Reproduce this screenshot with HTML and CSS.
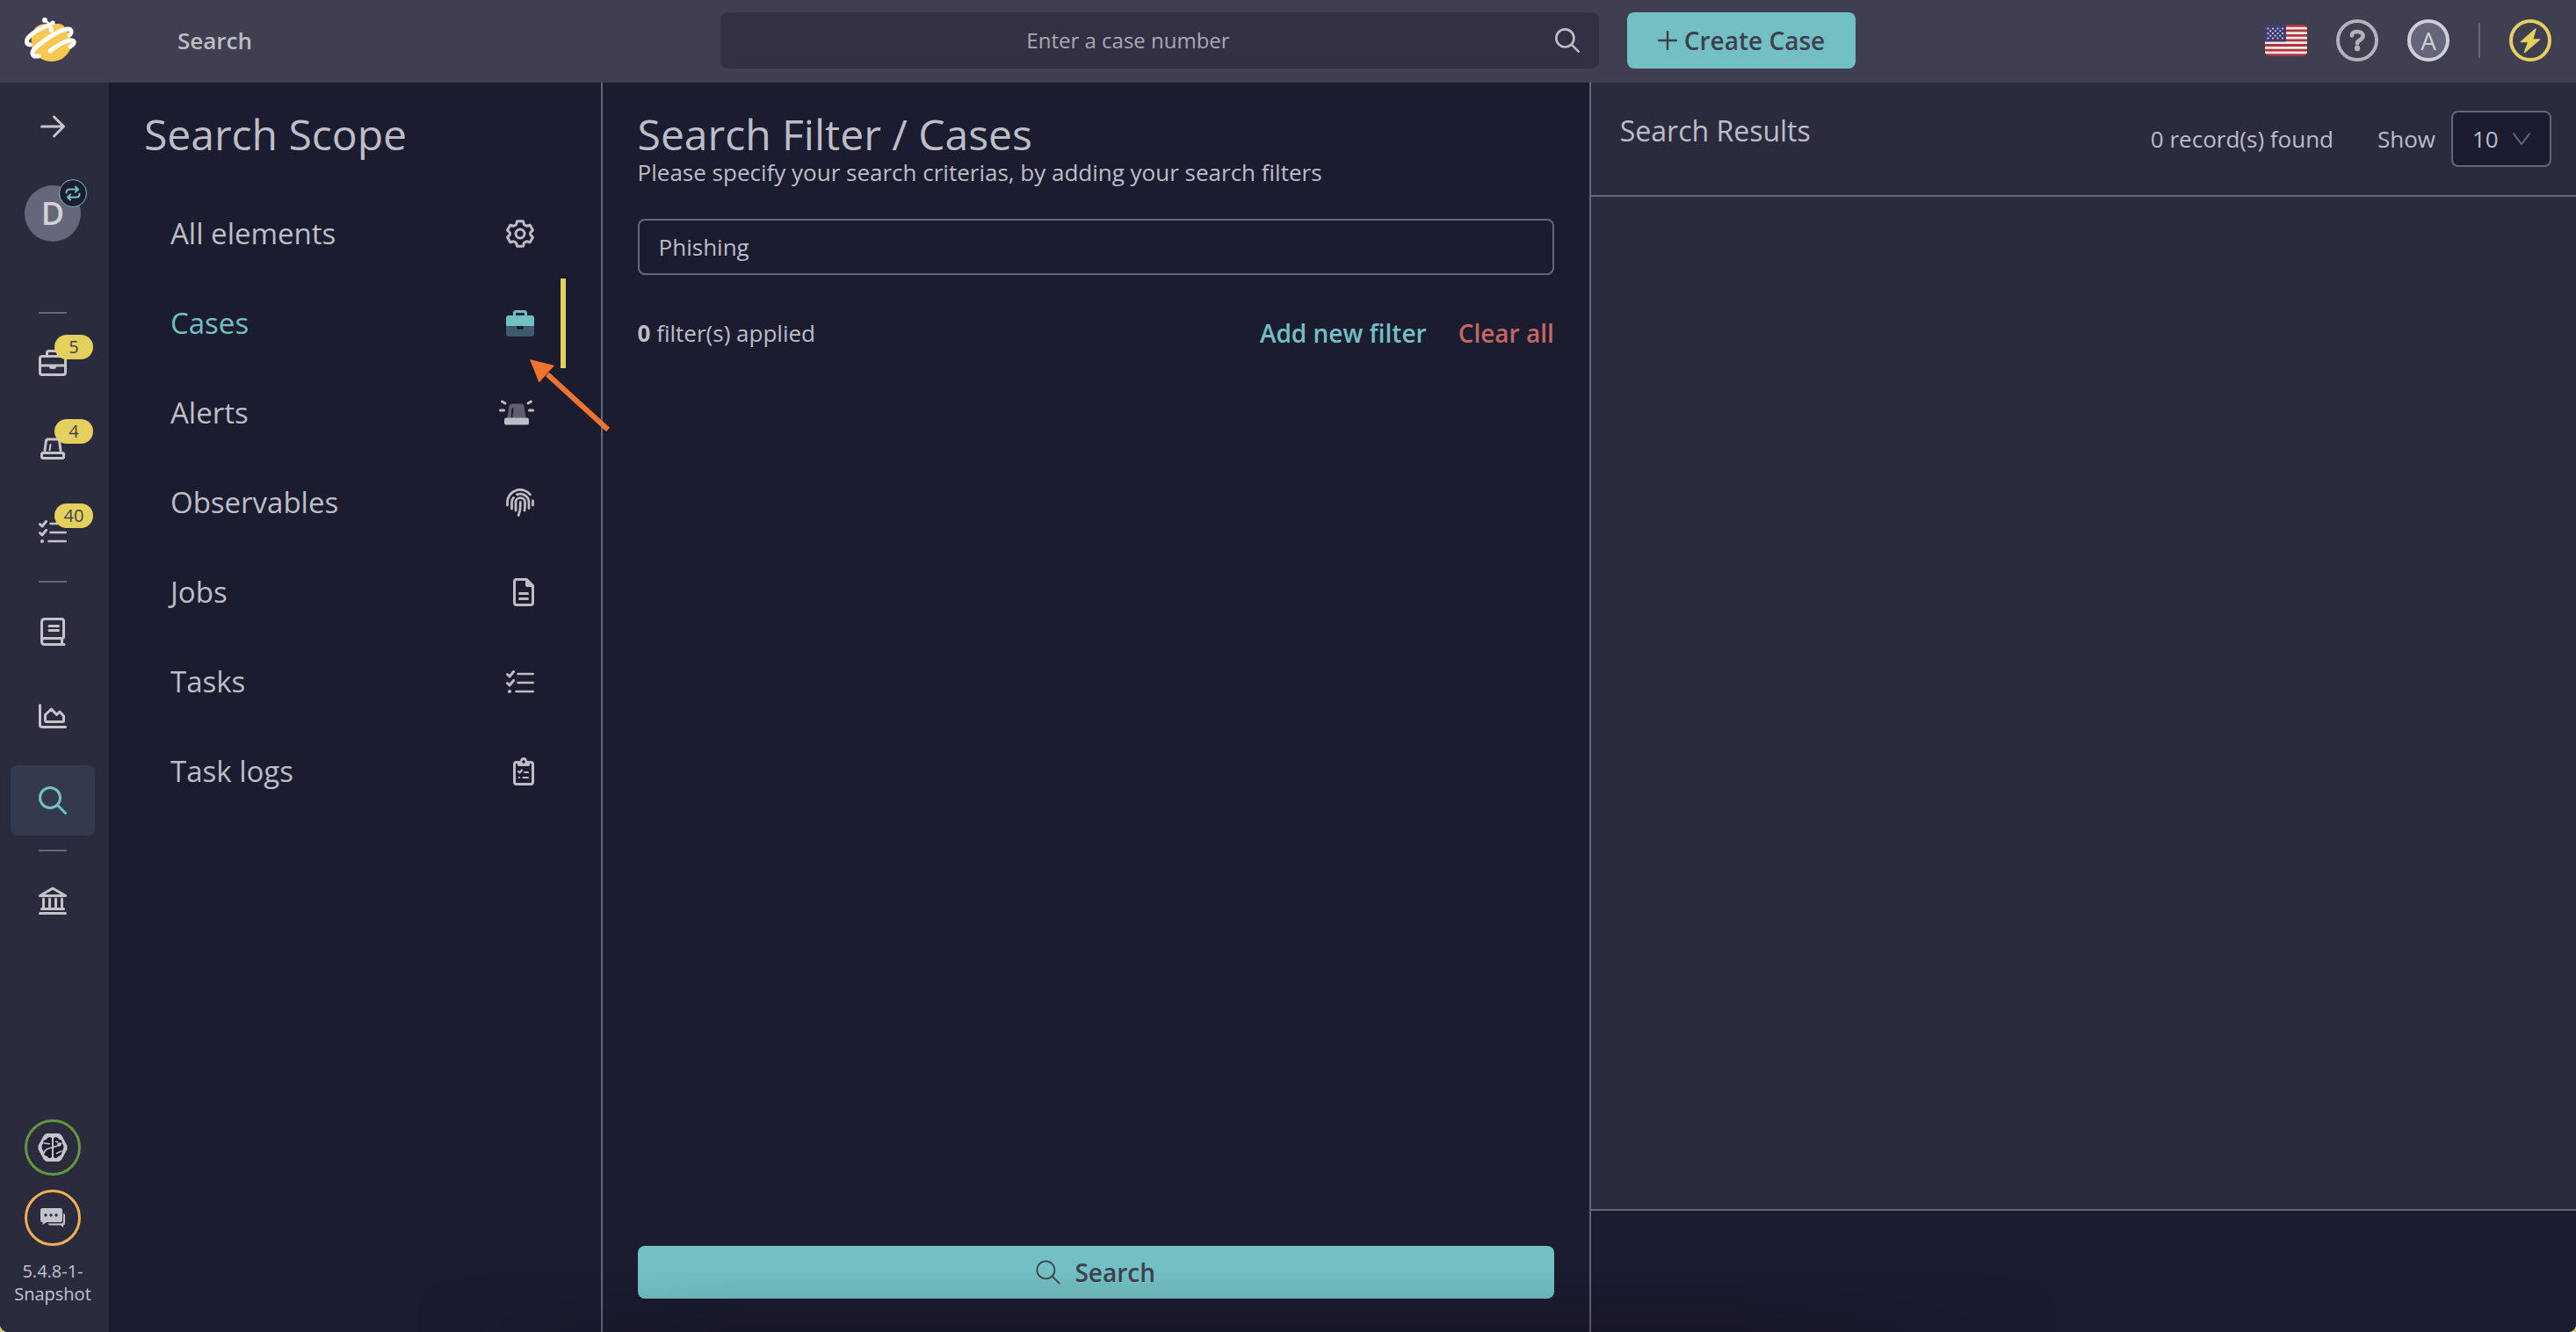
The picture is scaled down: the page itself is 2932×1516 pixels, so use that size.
FILE: index.html
```html
<!DOCTYPE html>
<html lang="en">
<head>
<meta charset="utf-8">
<meta name="viewport" content="width=device-width, initial-scale=1">
<title>Search</title>
<link rel="stylesheet" href="styles.css">
</head>
<body>
<svg class="sprite" aria-hidden="true">
  <symbol id="i-search" viewBox="0 0 32 32"><circle cx="13" cy="13" r="11.5"/><path d="M21.3 21.3 30.5 30.5"/></symbol>
  <symbol id="i-tasks" viewBox="0 0 32 32"><path d="M1.5 7.5 4 10l4.5-5.5M1.5 17.5 4 20l4.5-5.5"/><path d="M13.5 7H30.7M13.5 17H30.7M11.5 27H30.7" stroke-width="2.6"/><circle cx="4" cy="27" r="2" fill="currentColor" stroke="none"/></symbol>
</svg>
<div class="app">
  <header class="topbar">
    <div class="topbar-left">
      <a class="logo" href="#" aria-label="Home">
        <svg width="62" height="54" viewBox="0 0 62 54" fill="none" stroke-linecap="round" stroke-linejoin="round">
          <path d="M16 10c4-2 8-2 14-2 7 0 12-1 15 3 2 3 4 6 6 10 3 6 3 12 0 18-4 7-11 12-20 12-7 0-14-3-20-9-3-4-4-11-3-18 1-6 3-12 8-14Z" fill="#f6c851"/>
          <path d="M6 32C1 31 1 26 7 21C13 16 21 12 27 10" stroke="#fff" stroke-width="5"/>
          <path d="M16 45H11C7 42 9 38 15 33C25 25 40 15 49 14C54 14 54 18 51 21" stroke="#fff" stroke-width="5"/>
          <path d="M29 39C35 34 46 27 53 27C58 27 57 31 52 34" stroke="#fff" stroke-width="5"/>
          <circle cx="23" cy="4" r="3" fill="#fff"/><circle cx="32" cy="7" r="2.6" fill="#fff"/>
          <path d="M23 4 28 8 32 7" stroke="#fff" stroke-width="2.4"/>
          <path d="M29 8C27 13 27 18 31 18C35 17 33 12 29 8Z" fill="#fff"/>
        </svg>
      </a>
      <span class="page-title">Search</span>
    </div>
    <div class="topbar-center">
      <form class="case-search">
        <input type="text" placeholder="Enter a case number" aria-label="Enter a case number">
        <button type="button" aria-label="Search case"><svg class="icon" width="28" height="28"><use href="#i-search"/></svg></button>
      </form>
      <button class="btn create" type="button"><svg width="22" height="22" viewBox="0 0 22 22" stroke="currentColor" stroke-width="2.4" stroke-linecap="round"><path d="M11 1V21M1 11H21"/></svg>Create Case</button>
    </div>
    <div class="topbar-right">
      <button class="round-btn" type="button" aria-label="Language">
        <svg width="48" height="36" viewBox="0 0 48 36">
          <clipPath id="flag-clip"><rect width="48" height="36" rx="5"/></clipPath>
          <g clip-path="url(#flag-clip)">
            <rect width="48" height="36" fill="#b0343c"/>
            <path d="M0 4.1H48M0 9.7H48M0 15.2H48M0 20.7H48M0 26.3H48M0 31.8H48" stroke="#eeeaec" stroke-width="2.8"/>
            <rect width="24" height="19.4" fill="#3f3d73"/>
            <path d="M3.5 4.5H22M3.5 10H22M3.5 15.500H22" stroke="#dcdce8" stroke-width="2" stroke-linecap="round" stroke-dasharray="0 5.5"/>
            <path d="M6.200 7.200H20M6.200 12.700H20" stroke="#dcdce8" stroke-width="2" stroke-linecap="round" stroke-dasharray="0 5.5"/>
          </g>
        </svg>
      </button>
      <button class="round-btn help" type="button" aria-label="Help">
        <svg width="48" height="48" viewBox="0 0 48 48" fill="none" stroke="currentColor" stroke-width="4"><circle cx="24" cy="24" r="22"/><path d="M18 18.500C18 14.500 20.500 14 24 14C28 14 30.500 16 30.500 19C30.500 23.500 24 23.500 24 27.500" stroke-width="4.6" stroke-linecap="round"/><circle cx="24" cy="33" r="3.2" fill="currentColor" stroke="none"/></svg>
      </button>
      <button class="round-btn user" type="button">A</button>
      <span class="v-rule"></span>
      <button class="round-btn bolt" type="button" aria-label="Status">
        <svg width="48" height="48" viewBox="0 0 48 48"><circle cx="24" cy="24" r="22" fill="none" stroke="currentColor" stroke-width="4"/><path d="M30 11 13.500 25.500H22L17.500 37.500 34.500 23H26.500Z" fill="currentColor" stroke="currentColor" stroke-width="1.500" stroke-linejoin="round"/></svg>
      </button>
    </div>
  </header>

  <div class="workspace">
    <nav class="sidebar" aria-label="Main">
      <button class="side-item expand" type="button" aria-label="Expand menu"><svg class="icon" width="32" height="32" viewBox="0 0 32 32"><path d="M3.500 16H28.500M17.500 5 28.500 16 17.500 27"/></svg></button>
      <button class="org" type="button"><span>D</span>
        <span class="org-switch"><svg width="18" height="18" viewBox="0 0 18 18" fill="none" stroke="currentColor" stroke-width="2" stroke-linecap="round"><path d="M1.500 8.500C1.500 5.500 3 4.500 5 4.500H14M12 1.500 15 4.500 12 7.500M16.500 9.500C16.500 12.500 15 13.500 13 13.500H4M6 10.500 3 13.500 6 16.500"/></svg></span>
      </button>
      <hr>
      <a class="side-item" href="#" aria-label="Cases"><svg class="icon" width="32" height="32" viewBox="0 0 32 32"><rect x="1.500" y="8.500" width="29" height="21" rx="2.500"/><path d="M9.500 8V4.500Q9.500 2.500 11.500 2.500H20.500Q22.500 2.500 22.500 4.500V8M1.500 19H30.500"/><path d="M12 19H20V20Q20 23 17.500 23H14.500Q12 23 12 20Z" fill="currentColor" stroke="none"/></svg><span class="badge">5</span></a>
      <a class="side-item" href="#" aria-label="Alerts"><svg class="icon" width="32" height="32" viewBox="0 0 32 32"><rect x="3.500" y="22.500" width="25" height="6" rx="1.500"/><path d="M7 19.500 8.500 8.500Q8.800 7 10.500 7H21.500Q23.200 7 23.500 8.500L25 19.500"/><path d="M12.500 19.500 13.500 13" stroke-width="2"/></svg><span class="badge">4</span></a>
      <a class="side-item" href="#" aria-label="Tasks"><svg class="icon" width="32" height="32"><use href="#i-tasks"/></svg><span class="badge">40</span></a>
      <hr>
      <a class="side-item" href="#" aria-label="Knowledge base"><svg class="icon" width="32" height="32" viewBox="0 0 32 32"><path d="M29 30.500H6.500Q3.500 30.500 3.500 27V5Q3.500 1.500 7 1.500H26Q28.500 1.500 28.500 4V21.500Q28.500 23.500 26.500 23.500H6.500Q3.500 23.500 3.500 27M26.500 24V30M12 9.500H22.500M12 14.500H22.500"/></svg></a>
      <a class="side-item" href="#" aria-label="Dashboards"><svg class="icon" width="32" height="32" viewBox="0 0 32 32"><path d="M1.500 3.500V26Q1.500 28.500 4 28.500H30.500"/><path d="M7.500 21V14.500L14.500 8 20.500 14.500 24 11 28.500 16V21Q28.500 22.500 27 22.500H9Q7.500 22.500 7.500 21Z"/></svg></a>
      <a class="side-item active" href="#" aria-label="Search"><svg class="icon" width="32" height="32"><use href="#i-search"/></svg></a>
      <hr>
      <a class="side-item" href="#" aria-label="Organisation"><svg class="icon" width="32" height="32" viewBox="0 0 32 32"><path d="M1.500 10.500 16 2 30.500 10.500V10.500H1.500ZM1.500 30.500H30.500M3.500 25.500H28.500M5.500 14V25M12.500 14V25M19.500 14V25M26.500 14V25"/></svg></a>
      <div class="side-bottom">
        <button class="ring green" type="button" aria-label="Cortex"><svg width="36" height="36" viewBox="0 0 36 36"><path d="M11 2H25L28 4 34.500 16V20L28 32 25 34H11L8 32 1.500 20V16L8 4Z" fill="currentColor"/><path d="M17 7C14 5 11 7 11 9C8 9 7 11 7.500 13C5 15 5 20 7.500 22C7 26 10 28 12 28C13 31 16 30 17 29ZM19 7C22 5 25 7 25 9C28 9 29 11 28.500 13C31 15 31 20 28.500 22C29 26 26 28 24 28C23 31 20 30 19 29Z" fill="#1b1c30"/><path d="M8 25C9 16 22 20 28 13M8 13 15 14M21 11 24 12M22 25 28 22" fill="none" stroke="currentColor" stroke-width="1.600"/><circle cx="25.500" cy="14.500" r="2.200" fill="currentColor"/></svg></button>
        <button class="ring orange" type="button" aria-label="Chat"><svg width="32" height="32" viewBox="0 0 32 32"><path d="M4.500 5H24.500Q27 5 27 7.500V18.500Q27 21 24.500 21H9L4.500 24V21Q2 21 2 18.500V7.500Q2 5 4.500 5Z" fill="currentColor"/><path d="M28 11Q30 11 30 13V22Q30 24.500 28 24.500V27L25 24.500H13Q11 24.500 10.500 22.500H26Q28 22.500 28 20Z" fill="currentColor"/><g fill="#2b2b3e"><circle cx="8" cy="13" r="1.700"/><circle cx="14" cy="13" r="1.700"/><circle cx="20" cy="13" r="1.700"/></g></svg></button>
        <p class="version">5.4.8-1-Snapshot</p>
      </div>
    </nav>

    <main class="panels">
      <section class="scope">
        <h1>Search Scope</h1>
        <ul class="scope-list">
          <li><a href="#">All elements<svg class="icon" width="32" height="32" viewBox="0 0 32 32"><circle cx="16" cy="16" r="5"/><path d="M12.500 1.800H19.500L20.500 5.700 23.300 7.300 27.200 6.200 30.500 12 27.700 14.800V17.200L30.500 20 27.200 25.800 23.300 24.700 20.500 26.300 19.500 30.200H12.500L11.500 26.300 8.700 24.700 4.800 25.800 1.500 20 4.300 17.200V14.800L1.500 12 4.800 6.200 8.700 7.300 11.500 5.700Z"/></svg></a></li>
          <li><a class="active" href="#" aria-current="true">Cases<svg width="32" height="32" viewBox="0 0 32 32"><path d="M9.500 8V4.500Q9.500 2.500 11.500 2.500H20.500Q22.500 2.500 22.500 4.500V8" fill="none" stroke="currentColor" stroke-width="3"/><path d="M3 7H29Q32 7 32 10V19H0V10Q0 7 3 7Z" fill="currentColor"/><path d="M0 19H12V20.500Q12 23 14.500 23H17.500Q20 23 20 20.500V19H32V28Q32 31 29 31H3Q0 31 0 28Z" fill="#3f5b6b"/></svg></a></li>
          <li><a href="#">Alerts<svg width="40" height="32" viewBox="0 0 40 32"><path d="M9 24 11.500 8.500Q12 5.500 15 5.500H25Q28 5.500 28.500 8.500L31 24Z" fill="#5f5e70"/><path d="M14.500 21 15.500 11" stroke="#1b1c30" stroke-width="1.800" stroke-linecap="round"/><rect x="6" y="21.500" width="28" height="8" rx="2" fill="currentColor"/><path d="M1.500 13H5.500M34.500 13H38.500M3.500 3 7 5M36.500 3 33 5" stroke="currentColor" stroke-width="3" stroke-linecap="round"/></svg></a></li>
          <li><a href="#">Observables<svg class="icon" width="32" height="32" viewBox="0 0 32 32"><g stroke-width="2.800"><path d="M1.500 19V15.500A14.500 14.500 0 0 1 27.500 7M30.500 14V19M6.500 23V15.500Q6.500 12.500 8.500 10.500M12.500 6.800C20 4.500 26 9.500 26 15.500V22.500M11 25V15.500C11 9 21.500 9 21.500 15.500V19Q21.500 22 21 25M16.300 15.500V20Q16.300 25 14.200 30.500"/></g></svg></a></li>
          <li><a href="#">Jobs<svg class="icon" width="24" height="32" viewBox="0 0 24 32"><path d="M4 1.500H15.500L22.500 8.500V28Q22.500 30.500 20 30.500H4Q1.500 30.500 1.500 28V4Q1.500 1.500 4 1.500ZM7.500 17.500H16.500M7.500 23.500H16.500"/><path d="M14 1.500 23 10H16Q14 10 14 8Z" fill="currentColor" stroke="none"/></svg></a></li>
          <li><a href="#">Tasks<svg class="icon" width="32" height="32"><use href="#i-tasks"/></svg></a></li>
          <li><a href="#">Task logs<svg class="icon" width="24" height="32" viewBox="0 0 24 32"><rect x="1.500" y="5.500" width="21" height="25" rx="2.500"/><path d="M5 5H8Q8 0 12 0Q16 0 16 5H19V8.500Q19 10 17.500 10H6.500Q5 10 5 8.500Z" fill="currentColor" stroke="none"/><circle cx="12" cy="5" r="1.800" fill="#1b1c30" stroke="none"/><path d="M6 16 7.500 17.500 10 14.500M13 17H17M11.500 23H17M7 23H7.200" stroke-width="2.200"/></svg></a></li>
        </ul>
        <svg class="pointer" width="94" height="86" viewBox="0 0 94 86" aria-hidden="true"><path d="M21 18 90 81" stroke="#f0742e" stroke-width="6"/><path d="M1 1 29 8 11.500 27.500Z" fill="#f0742e"/></svg>
      </section>

      <section class="filter">
        <h1>Search Filter / Cases</h1>
        <p class="hint">Please specify your search criterias, by adding your search filters</p>
        <input class="query" type="text" value="Phishing" aria-label="Search text">
        <div class="filter-row">
          <span><b>0</b> filter(s) applied</span>
          <span class="filter-actions"><a class="add" href="#">Add new filter</a><a class="clear" href="#">Clear all</a></span>
        </div>
        <button class="btn submit" type="button"><svg class="icon thin" width="28" height="28"><use href="#i-search"/></svg>Search</button>
      </section>

      <section class="results">
        <div class="results-head">
          <h2>Search Results</h2>
          <span class="count">0 record(s) found</span>
          <label for="page-size">Show</label>
          <span class="select-wrap">
            <select id="page-size"><option>10</option><option>20</option><option>50</option></select>
            <svg width="22" height="16" viewBox="0 0 22 16" fill="none" stroke="currentColor" stroke-width="2"><path d="M1.500 1.500 11 14 20.500 1.500"/></svg>
          </span>
        </div>
        <div class="results-body"></div>
        <div class="results-foot"></div>
      </section>
    </main>
  </div>
</div>
</body>
</html>
```
FILE: styles.css
```css
:root {
  --bg: #1b1c30;
  --surface: #2b2b3e;
  --header: #3f3f51;
  --line: #66667b;
  --text: #bdbdc5;
  --teal: #72c0c3;
  --yellow: #e4d05d;
}

* { box-sizing: border-box; }

html { background: #d6cc86; }

body {
  margin: 0;
  font: 26px/36px "Open Sans", "Noto Sans", sans-serif;
  color: var(--text);
}

button, input, select { font: inherit; color: inherit; margin: 0; }
button { padding: 0; border: 0; background: none; cursor: pointer; }
a { color: inherit; text-decoration: none; }
h1, h2, p, ul { margin: 0; padding: 0; font-weight: 400; }
svg { display: block; flex: none; }

.sprite { position: absolute; width: 0; height: 0; }

.icon {
  fill: none;
  stroke: currentColor;
  stroke-width: 3px;
  stroke-linecap: round;
  stroke-linejoin: round;
}
.icon.thin { stroke-width: 2px; }

.app {
  position: relative;
  display: flex;
  flex-direction: column;
  min-height: 100vh;
  overflow: hidden;
  border-radius: 0 0 9px 9px;
  background: var(--bg);
}

/* Soft shade along the lower edge of the window */
.app::after {
  content: "";
  position: absolute;
  right: 20%;
  bottom: 0;
  left: 16%;
  height: 70px;
  background: linear-gradient(transparent, rgba(0, 0, 0, 0.16));
  mask-image: linear-gradient(90deg, transparent, #000 20%, #000 80%, transparent);
  pointer-events: none;
}

/* Top bar */
.topbar {
  display: grid;
  grid-template-columns: 1fr auto 1fr;
  height: 94px;
  padding: 0 28px 2px 0;
  background: var(--header);
}
.topbar-left { display: flex; align-items: center; gap: 78px; }
.logo { width: 124px; padding-left: 28px; }
.page-title { font-weight: 600; }
.topbar-center {
  display: flex;
  align-items: center;
  gap: 32px;
  margin-left: 28px;
}
.case-search {
  display: flex;
  width: 1000px;
  height: 64px;
  border-radius: 8px;
  background: #323042;
}
.case-search input {
  flex: 1;
  min-width: 0;
  border: 0;
  background: none;
  outline: none;
  font-size: 24px;
  text-align: center;
}
.case-search input::placeholder { color: #a9a9b2; opacity: 1; }
.case-search button { display: grid; place-items: center; width: 72px; }
.btn {
  display: flex;
  align-items: center;
  justify-content: center;
  border-radius: 8px;
  background: var(--teal);
  color: #403f50;
  font-size: 28px;
  font-weight: 600;
}
.create { gap: 8px; width: 260px; height: 64px; }
.topbar-right {
  display: flex;
  align-items: center;
  justify-content: flex-end;
  gap: 33px;
}
.round-btn { width: 48px; }
.help { color: #b2b2bb; }
.bolt { color: var(--yellow); }
.user {
  height: 48px;
  border: 4px solid #cfcfd7;
  border-radius: 50%;
  background: #66667b;
  color: #cfcfd7;
  font-size: 28px;
  line-height: 40px;
}
.v-rule { width: 2px; height: 40px; background: var(--line); }

/* Side bar */
.workspace { display: flex; flex: 1; }
.sidebar {
  display: flex;
  flex-direction: column;
  align-items: center;
  gap: 16px;
  width: 124px;
  padding: 10px 4px 30px 0;
  background: var(--surface);
  color: #c3c3cb;
}
.sidebar hr { width: 32px; height: 2px; margin: 0; border: 0; background: var(--line); }
.side-item {
  position: relative;
  display: grid;
  place-items: center;
  width: 96px;
  height: 80px;
  border-radius: 8px;
}
.side-item.active { background: #34394d; color: var(--teal); }
.badge {
  position: absolute;
  top: 8px;
  right: 2px;
  width: 44px;
  border-radius: 14px;
  background: var(--yellow);
  color: #403f50;
  font-size: 20px;
  line-height: 28px;
  text-align: center;
}
.org {
  position: relative;
  width: 64px;
  height: 64px;
  margin: 11px 0 64px;
  border-radius: 50%;
  background: #66667b;
  color: #d0d0d8;
  font-size: 36px;
  font-weight: 600;
}
.org-switch {
  position: absolute;
  top: -7px;
  right: -7px;
  display: grid;
  place-items: center;
  width: 32px;
  height: 32px;
  border: 1px solid var(--teal);
  border-radius: 50%;
  background: var(--bg);
  color: var(--teal);
}
.side-bottom {
  display: flex;
  flex-direction: column;
  align-items: center;
  gap: 16px;
  margin-top: auto;
}
.ring {
  display: grid;
  place-items: center;
  width: 64px;
  height: 64px;
  border: 3px solid;
  border-radius: 50%;
}
.ring svg { color: #c3c3cb; }
.green { border-color: #66953f; }
.orange { border-color: #f6ae54; }
.version { width: 96px; font-size: 20px; line-height: 26px; text-align: center; }

/* Panels */
.panels { display: grid; grid-template-columns: 1fr 2fr 2fr; flex: 1; }
h1 { font-size: 48px; line-height: 52px; }

.scope {
  position: relative;
  padding: 33px 40px 32px;
  border-right: 2px solid var(--line);
}
.scope-list { margin-top: 36px; list-style: none; font-size: 33px; }
.scope-list a {
  display: flex;
  align-items: center;
  justify-content: space-between;
  height: 102px;
  padding: 0 30px;
  border-right: 6px solid transparent;
}
.scope-list a.active { border-color: var(--yellow); color: var(--teal); }
.pointer { position: absolute; top: 314px; right: -12px; z-index: 1; }

.filter { display: flex; flex-direction: column; padding: 33px 40px 38px; }
.hint { line-height: 34px; }
.query {
  height: 64px;
  margin-top: 36px;
  padding: 0 22px;
  border: 2px solid var(--line);
  border-radius: 8px;
  background: none;
  outline: none;
}
.filter-row { display: flex; justify-content: space-between; margin-top: 48px; }
.filter-actions { display: flex; gap: 36px; font-size: 28px; font-weight: 600; }
.add { color: var(--teal); }
.clear { color: #c46664; }
.submit { gap: 16px; height: 60px; margin-top: auto; }

.results {
  display: flex;
  flex-direction: column;
  border-left: 2px solid var(--line);
  background: var(--surface);
}
.results-head {
  display: flex;
  align-items: center;
  padding: 32px 28px 32px 33px;
  border-bottom: 2px solid var(--line);
}
.results-head h2 {
  align-self: flex-start;
  margin-right: auto;
  font-size: 32px;
  line-height: 46px;
}
.count { margin-right: 50px; }
.results-head label { margin-right: 18px; }
.select-wrap { position: relative; }
.select-wrap select {
  display: block;
  width: 114px;
  height: 64px;
  padding: 0 22px;
  border: 2px solid var(--line);
  border-radius: 8px;
  background: var(--bg);
  appearance: none;
}
.select-wrap svg {
  position: absolute;
  top: 24px;
  right: 23px;
  color: var(--line);
  pointer-events: none;
}
.results-body { flex: 1; }
.results-foot { height: 140px; border-top: 2px solid var(--line); background: var(--bg); }
```
